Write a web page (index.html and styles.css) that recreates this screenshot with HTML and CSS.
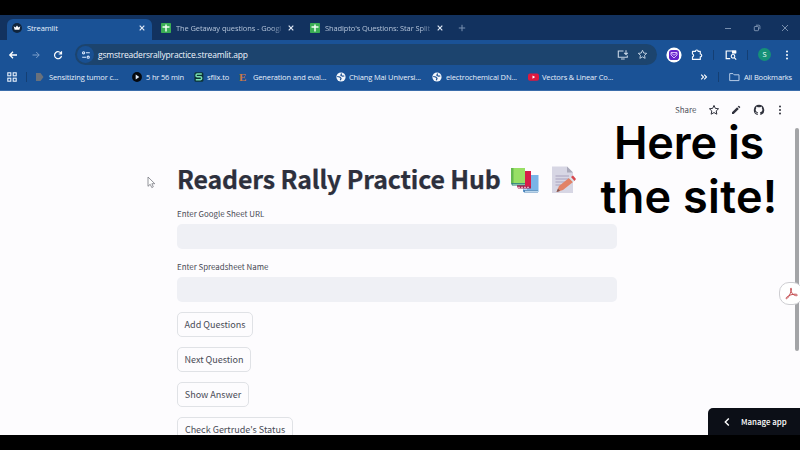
FILE: index.html
```html
<!DOCTYPE html>
<html lang="en">
<head>
<meta charset="utf-8">
<title>Streamlit</title>
<link rel="stylesheet" href="styles.css">
</head>
<body>
<svg class="defs" width="0" height="0">
  <symbol id="close" viewBox="0 0 8 8"><path d="M1.7 1.7 6.3 6.3M6.3 1.7 1.7 6.3" fill="none" stroke="currentColor" stroke-width="1.2"/></symbol>
  <symbol id="sheet" viewBox="0 0 10 10"><rect width="10" height="10" rx=".7" fill="#3aae55"/><path d="M5 1.4V8.6M1.5 3.9H8.5" stroke="#f2fff4" stroke-width="1.5"/></symbol>
  <symbol id="globe" viewBox="0 0 10 10"><circle cx="5" cy="5" r="4.6" fill="#f3f7fc"/><path d="M1.200 4.500 3.800 5 5 6.400 4.300 8.200M5.600 1.600 4.900 3.200 6.400 4.200 8.300 4" fill="none" stroke="#1a4f92" stroke-width="1.200"/></symbol>
  <symbol id="star" viewBox="0 0 12 12"><path d="M6 1.4 7.35 4.4 10.6 4.75 8.2 6.95 8.85 10.2 6 8.55 3.15 10.2 3.8 6.95 1.4 4.75 4.65 4.4Z" fill="none" stroke="currentColor" stroke-width="1" stroke-linejoin="round"/></symbol>
  <symbol id="dots" viewBox="0 0 4 10"><circle cx="2" cy="1.6" r="1" fill="currentColor"/><circle cx="2" cy="5" r="1" fill="currentColor"/><circle cx="2" cy="8.4" r="1" fill="currentColor"/></symbol>
</svg>
<div class="window">
  <div class="tabstrip">
    <div class="tab active">
      <svg width="10" height="10" viewBox="0 0 10 10"><circle cx="5" cy="5" r="5" fill="#10243b"/><path d="M1.7 3.3 3.5 4.4 5 2.6 6.5 4.4 8.3 3.3 7.4 6.8H2.6Z" fill="#fff"/></svg>
      <span class="tab-title t1">Streamlit</span>
      <svg class="x" width="8" height="8"><use href="#close"/></svg>
    </div>
    <div class="tab second">
      <svg width="10" height="10"><use href="#sheet"/></svg>
      <span class="tab-title fade t2">The Getaway questions - Googl</span>
      <svg class="x" width="8" height="8"><use href="#close"/></svg>
    </div>
    <div class="tab third">
      <svg width="10" height="10"><use href="#sheet"/></svg>
      <span class="tab-title fade t3">Shadipto's Questions: Star Split</span>
      <svg class="x" width="8" height="8"><use href="#close"/></svg>
    </div>
    <svg class="newtab" width="8" height="8" viewBox="0 0 8 8"><path d="M4 .8V7.2M.8 4H7.2" stroke="#7890b1" stroke-width="1"/></svg>
    <div class="controls">
      <svg width="8" height="8" viewBox="0 0 8 8"><path d="M1 4.5H7"/></svg>
      <svg width="8" height="8" viewBox="0 0 8 8"><rect x="1.3" y="2.5" width="4.2" height="4.2" rx=".7"/><path d="M2.9 1.2H5.8Q6.9 1.2 6.9 2.3V5.2"/></svg>
      <svg width="8" height="8" viewBox="0 0 8 8"><path d="M1 1 7 7M7 1 1 7"/></svg>
    </div>
  </div>

  <div class="toolbar">
    <div class="nav">
      <svg width="10" height="10" viewBox="0 0 10 10"><path d="M9 5H2M5 1.8 1.8 5 5 8.2" fill="none" stroke="#fff" stroke-width="1.3"/></svg>
      <svg width="10" height="10" viewBox="0 0 10 10"><path d="M1.5 5H8.2M5.2 2 8.2 5 5.2 8" fill="none" stroke="#7d9fca" stroke-width="1"/></svg>
      <svg width="10" height="10" viewBox="0 0 10 10"><path d="M8.2 3.7A3.5 3.5 0 1 0 8.5 5.8M8.5 1.2V4H5.7" fill="none" stroke="#fff" stroke-width="1.2"/></svg>
    </div>
    <div class="address">
      <div class="site"><svg width="10" height="10" viewBox="0 0 10 10"><g fill="none" stroke="#dceaff" stroke-width="1.1"><circle cx="2.6" cy="2.8" r="1.1"/><path d="M5 2.8H8.8M1.2 7.2H5"/><circle cx="7.2" cy="7.2" r="1.1"/></g></svg></div>
      <span class="url">gsmstreadersrallypractice.streamlit.app</span>
      <svg class="install" width="12" height="12" viewBox="0 0 12 12"><path d="M6.5 2H1.3V8.3H10.3V6.5M4 10H7.7M9 1.2V5.3M7.2 3.8 9 5.5 10.8 3.8" fill="none" stroke="#c8d6e6" stroke-width="1.1"/></svg>
      <svg class="fav" width="11" height="11"><use href="#star"/></svg>
    </div>
    <div class="ext">
      <svg width="16" height="16" viewBox="0 0 16 16"><circle cx="8" cy="8" r="7.6" fill="#fff"/><rect x="3" y="3" width="10" height="10" rx="2.800" fill="#6423ca"/><path d="M5 5.500H11V8L8 11 5 8ZM5.200 6 8 8.300 10.800 6" fill="none" stroke="#e4c9ff" stroke-width=".9"/></svg>
      <svg width="12" height="12" viewBox="0 0 12 12"><path d="M1.5 2.4H4.4A1.4 1.4 0 0 1 7.2 2.4H9.3V5A1.4 1.4 0 0 1 9.3 7.8V10.4H1.5V7.9A1.5 1.5 0 0 0 1.5 5Z" fill="none" stroke="#f1f6fd" stroke-width="1.2" stroke-linejoin="round"/></svg>
      <i class="bar"></i>
      <svg width="12" height="12" viewBox="0 0 12 12"><path d="M5.2 9.6H1.2V2H10.6V4" fill="none" stroke="#fff" stroke-width="1.2"/><path d="M7 1.6H11.2V4.6H7Z" fill="#fff"/><circle cx="8" cy="7.3" r="1.8" fill="none" stroke="#fff" stroke-width="1.1"/><path d="M9.3 8.6 11.2 10.6" stroke="#fff" stroke-width="1.2"/></svg>
      <i class="bar"></i>
      <span class="avatar">S</span>
      <svg class="menu" width="4" height="10"><use href="#dots"/></svg>
    </div>
  </div>

  <div class="bookmarks">
    <svg width="10" height="10" viewBox="0 0 10 10"><g fill="none" stroke="#e8f1fc" stroke-width="1.1"><rect x=".8" y=".8" width="3" height="3"/><rect x="6.2" y=".8" width="3" height="3"/><rect x=".8" y="6.2" width="3" height="3"/><rect x="6.2" y="6.2" width="3" height="3"/></g></svg>
    <i class="bar"></i>
    <svg width="10" height="10" viewBox="0 0 10 10"><path d="M0 1H4.5L7.5 5 4.5 9H0Z" fill="#69717c"/></svg><span class="b1">Sensitizing tumor c...</span>
    <svg width="10" height="10" viewBox="0 0 10 10"><circle cx="5" cy="5" r="4.9" fill="#05080d"/><path d="M3.7 2.6 7.3 5 3.7 7.4Z" fill="#dce9f8"/></svg><span class="b2">5 hr 56 min</span>
    <svg width="10" height="10" viewBox="0 0 10 10"><rect x=".4" y=".2" width="9" height="9.5" rx="1.5" fill="#0d3437"/><path d="M7.8 2.1H3.3Q2 2.1 2 3.4T3.3 4.8H6.4Q7.7 4.8 7.7 6.2T6.4 7.7H1.8" fill="none" stroke="#79e2b3" stroke-width="1.5"/></svg><span class="b3">sflix.to</span>
    <span class="e-icon">E</span><span class="b4">Generation and eval...</span>
    <svg width="10" height="10"><use href="#globe"/></svg><span class="b5">Chiang Mai Universi...</span>
    <svg width="10" height="10"><use href="#globe"/></svg><span class="b6">electrochemical DN...</span>
    <svg width="11" height="10" viewBox="0 0 11 10"><rect y="1.4" width="11" height="7.4" rx="2" fill="#df183f"/><path d="M4.5 3.5 7.2 5.1 4.5 6.7Z" fill="#fff"/></svg><span class="b7">Vectors &amp; Linear Co...</span>
    <svg width="8" height="8" viewBox="0 0 8 8"><path d="M1.2 1.7 3.5 4 1.2 6.3M4.2 1.7 6.5 4 4.2 6.3" fill="none" stroke="#fff" stroke-width="1.1"/></svg>
    <i class="bar"></i>
    <svg width="11" height="10" viewBox="0 0 11 10"><path d="M.7 1.6H4L5.2 2.8H10V8.6H.7Z" fill="none" stroke="#b7cce7" stroke-width="1"/></svg><span class="b8">All Bookmarks</span>
  </div>

  <main class="page">
    <div class="app-tools">
      <span>Share</span>
      <svg width="12" height="12"><use href="#star"/></svg>
      <svg width="10" height="10" viewBox="0 0 10 10"><path d="M1 9V7.3L6.1 2.2 7.8 3.9 2.7 9ZM6.7 1.6 7.4.9Q7.8.6 8.2.9L9.1 1.8Q9.4 2.2 9.1 2.6L8.4 3.3Z" fill="#30323d"/></svg>
      <svg width="12" height="12" viewBox="0 0 16 16"><path fill="#30323d" d="M8 1.1a7 7 0 0 0-2.2 13.6c.4.1.5-.2.5-.4v-1.6c-1.9.4-2.4-.8-2.4-.8-.3-.8-.8-1-.8-1-.6-.5.1-.5.1-.5.7.1 1.1.8 1.1.8.6 1.1 1.7.8 2.1.6l.4-1C5 10.600 3.600 9.900 3.600 7.500c0-.8.3-1.400.7-1.900-.1-.3-.3-1 .1-1.900 0 0 .6-.2 1.900.7a7 7 0 0 1 3.500 0c1.300-.9 1.900-.7 1.900-.7.4.9.2 1.600.1 1.900.4.5.7 1.100.7 1.900 0 2.400-1.400 3.100-3.200 3.300.3.3.5.7.5 1.300v2.200c0 .2.1.5.5.4A7 7 0 0 0 8 1.100Z"/></svg>
      <svg class="app-menu" width="4" height="10"><use href="#dots"/></svg>
    </div>

    <section class="form">
      <h1><span class="heading">Readers Rally Practice Hub</span>
        <svg class="books" width="30" height="28" viewBox="0 0 30 28"><path d="M14 9H28.500V26H13Z" fill="#79b4e7"/><path d="M14 10H17V25H14Z" fill="#b4d7f5"/><path d="M13 24H28V26.500H14Z" fill="#4c83b7"/><path d="M15 25.300H28" stroke="#d9edf9"/><path d="M8 5H21V20H7Z" fill="#d71d48"/><path d="M7 20H21V22.500H8Z" fill="#aa224f"/><path d="M8 21.300H20" stroke="#f5c2d6" stroke-dasharray="2 1"/><path d="M1 2H15V17H1Z" fill="#98df65"/><path d="M1 2H3.500V17H1Z" fill="#65b84f"/><path d="M1 17H15V19.500H2Z" fill="#287c76"/><path d="M2.500 18.300H15" stroke="#bde6c3" stroke-width=".8"/></svg>
        <svg class="memo" width="27" height="28" viewBox="0 0 27 28"><path d="M1 .5H16L22 6.500V27H1Z" fill="#d7d6e4"/><path d="M16 .5V6.500H22Z" fill="#aaa9ba"/><path d="M4.500 10H18M4.500 13H18M4.500 16H14M4.500 19H10" stroke="#aaa1bd" stroke-width="1.200"/><path d="M5.500 26 8 20 18 12 22 16 12 24Z" fill="#e28266"/><path d="M18 12 20 10.500 24 14.500 22 16Z" fill="#dbe2e9"/><path d="M20 11 22 9.500 25 13 23.500 15Z" fill="#d7484e"/><path d="M5.500 26 7 22.500 9 25Z" fill="#7d5553"/></svg>
      </h1>
      <label for="url">Enter Google Sheet URL</label>
      <input id="url" type="text">
      <label for="name">Enter Spreadsheet Name</label>
      <input id="name" type="text">
      <button class="w76">Add Questions</button>
      <button class="w74">Next Question</button>
      <button class="w72">Show Answer</button>
      <button class="w116">Check Gertrude's Status</button>
    </section>

    <p class="caption"><span class="line1">Here is</span><span class="line2">the site!</span></p>
    <i class="scrollbar"></i>
    <div class="pdf"><svg width="15" height="15" viewBox="0 0 15 15"><path d="M7.200 2.200C5.700 2 6.800 5.500 8.200 7.300 9.600 9.500 13.200 10.500 13.300 9 13.300 7.700 8 7.900 4.700 9.800 1.500 11.500 1.500 13 2.800 12.600 5 11.800 8.300 3.300 7.200 2.200Z" fill="none" stroke="#c54d51" stroke-width="1"/></svg></div>
    <div class="manage"><svg width="8" height="10" viewBox="0 0 8 10"><path d="M5.800 1.500 2.300 5 5.800 8.500" fill="none" stroke="#fff" stroke-width="1.400"/></svg><span>Manage app</span></div>
    <svg class="cursor" width="9" height="13" viewBox="0 0 9 13"><path d="M1 1V10.300L3.200 8.300 4.800 11.600 6.300 10.800 4.900 7.700H7.800Z" fill="#fff" stroke="#777982" stroke-width=".8"/></svg>
  </main>
</div>
</body>
</html>
```
FILE: styles.css
```css
* { box-sizing: border-box; }
body { margin: 0; background: #000; }
svg { display: block; flex: none; }
.defs { position: absolute; }
.window {
  width: 800px; height: 450px; padding: 15px 0; overflow: hidden;
  background: #000; font-family: "Open Sans", sans-serif; font-size: 7.5px;
}
.tabstrip { height: 25px; display: flex; background: #12325f; color: #b3c3d9; }
.tab { display: flex; align-items: center; height: 25px; padding-top: 1px; }
.tab .x { color: #e1e9f5; }
.active { width: 145px; height: 21px; margin: 4px 0 0 7px; padding: 0 0 3px 5px; background: #1a5296; border-radius: 6px 6px 0 0; color: #e9f2ff; }
.tab-title { flex: none; margin-left: 5px; white-space: nowrap; line-height: 13px; }
.t1 { width: 111px; letter-spacing: -.1px; }
.second { width: 149px; padding-left: 9px; }
.t2 { width: 106px; letter-spacing: -.1px; }
.third { width: 149px; padding-left: 9px; }
.t3 { width: 106px; letter-spacing: -.12px; }
.second .x, .third .x { margin-left: 5px; }
.fade { mask-image: linear-gradient(to right, #000 90%, rgba(0, 0, 0, .25)); }
.newtab { margin: 9px 0 0 8px; }
.controls { display: flex; gap: 20.500px; margin: 9px 11px 0 auto; }
.controls svg { fill: none; stroke: #8398b5; stroke-width: .9; }
.toolbar { height: 25px; display: flex; align-items: center; background: #1a5296; padding-top: 4px; }
.nav { width: 75px; display: flex; gap: 12.500px; padding-left: 8px; }
.address { width: 582px; height: 21px; border-radius: 11px; display: flex; align-items: center; background: #1c446e; padding-right: 9px; }
.site { width: 17px; height: 17px; margin-left: 2px; border-radius: 50%; background: #195092; display: grid; place-items: center; }
.url { margin-left: 4px; color: #eff5fd; font-size: 8.500px; letter-spacing: -.19px; }
.install { margin-left: auto; }
.fav { margin-left: 8px; color: #c8d6e6; }
.ext { display: flex; align-items: center; margin-left: 9px; }
.ext > svg:nth-child(2) { margin-left: 9px; }
.bar { width: 1px; height: 10px; background: #143f74; }
.ext .bar { margin: 0 10.500px 0 10px; }
.avatar { width: 13px; height: 13px; border-radius: 50%; background: #159078; color: #effff7; text-align: center; line-height: 13px; }
.ext .menu { margin-left: 14px; color: #fff; }
.bookmarks {
  height: 26px; display: grid; align-items: center; background: #1a5296; padding: 0 0 1px 7px;
  border-bottom: 1px solid #3b6dab; color: #e7effa; line-height: 12px; white-space: nowrap;
  grid-template-columns: 19px 10px 13px 83px 14px 48px 13px 32px 14px 83px 13px 83px 14px 82px 14px 158px 18px 11px 15px 56px;
}
.b1 { letter-spacing: -.13px; }
.b2 { letter-spacing: -.18px; }
.b3 { letter-spacing: -.1px; }
.b4, .b5, .b6, .b7, .b8 { letter-spacing: -.15px; }
.e-icon { color: #c87945; font: bold 11px/11px "Liberation Serif", serif; }
.page {
  height: 344px; position: relative; overflow: hidden; background: #fdfcfe;
  font-family: "Noto Sans CJK SC", "Noto Sans", sans-serif; color: #31333f;
}
.app-tools { height: 37px; display: flex; align-items: center; padding-left: 675px; font-size: 7.900px; color: #50525c; }
.app-tools span { width: 33px; }
.app-tools svg { color: #30323d; }
.app-tools svg:nth-of-type(2) { margin-left: 11px; }
.app-tools svg:nth-of-type(3) { margin-left: 12px; }
.app-tools .app-menu { margin-left: 13px; }
.form { width: 440px; margin-left: 177px; padding-top: 33px; display: flex; flex-direction: column; align-items: flex-start; }
h1 { display: flex; align-items: center; margin: 0 0 9px; height: 38px; font-size: 24.900px; line-height: 36px; letter-spacing: -.14px; white-space: nowrap; color: #2d303d; }
.heading { width: 333px; margin-top: -4px; -webkit-text-stroke: .25px #2d303d; }
.memo { margin-left: 11px; }
label { height: 16px; line-height: 12px; font-size: 7.900px; margin-top: 12px; color: #484a55; }
h1 + label { margin-top: 0; }
input { width: 440px; height: 25px; padding: 0 7px; border: 0; border-radius: 5px; background: #eff0f5; }
button {
  height: 25px; margin-top: 10px; padding: 1px 0 0; border: 1px solid #e0e2e6; border-radius: 5px; background: #fdfcfe;
  font: 9.050px/22px "Noto Sans CJK SC", "Noto Sans", sans-serif; color: #484a55; white-space: nowrap; text-align: center; letter-spacing: -.02px;
}
.w76 { width: 76px; }
.w74 { width: 74px; }
.w72 { width: 72px; }
.w116 { width: 116px; }
.caption { position: absolute; left: 589px; top: 25px; width: 200px; margin: 0; text-align: center; font: 600 45px/53.500px Inter, sans-serif; color: #000; white-space: nowrap; }
.caption span { display: block; }
.line1 { letter-spacing: -.2px; }
.line2 { letter-spacing: .3px; }
.scrollbar { position: absolute; right: 1px; top: 37px; width: 4px; height: 223px; border-radius: 2px; background: #a3a4a7; }
.pdf { position: absolute; left: 779px; top: 191px; width: 24px; height: 23px; border: 1px solid #ceced2; border-radius: 10px; background: #fff; padding: 3px 0 0 4px; }
.manage { position: absolute; right: 0; bottom: 0; width: 92px; height: 27px; border-radius: 5px 0 0; background: #0c0f17; color: #fff; display: flex; align-items: center; padding-left: 15px; font-size: 7.900px; font-weight: 500; }
.manage span { margin-left: 10px; white-space: nowrap; }
.cursor { position: absolute; left: 147px; top: 85px; }
```
